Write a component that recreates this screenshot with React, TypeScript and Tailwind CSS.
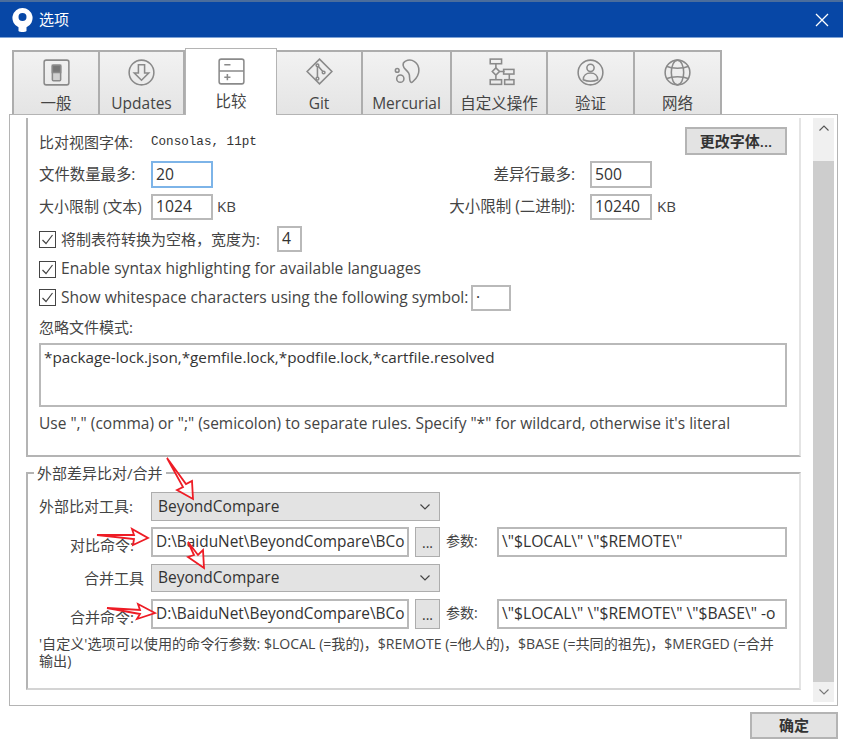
import React from "react";

const font = { fontFamily: '"Open Sans","Noto Sans CJK SC",sans-serif' };

const Stroke = ({ children, size = 33 }: { children: React.ReactNode; size?: number }) => (
  <svg width={size} height={size} viewBox="0 0 32 32" fill="none" stroke="#8a8a8a" strokeWidth="1.500">
    {children}
  </svg>
);

const icons: Record<string, React.ReactNode> = {
  general: (
    <Stroke>
      <rect x="4" y="4" width="24" height="24" rx="2" />
      <rect x="12" y="9" width="8" height="15" rx="1" fill="#d0d0d0" />
      <rect x="12" y="9" width="8" height="7" fill="#777" />
    </Stroke>
  ),
  updates: (
    <Stroke>
      <circle cx="16" cy="16" r="12" />
      <path d="M13 8.500h6v8h4l-7 7-7-7h4z" />
    </Stroke>
  ),
  diff: (
    <Stroke>
      <rect x="4" y="4" width="24" height="24" rx="2" />
      <path d="M4 15.500h24M9 9.500h6M9 21.500h6M12 18.500v6" />
    </Stroke>
  ),
  git: (
    <Stroke>
      <path d="M16 3l12 12-12 12L4 15z" />
      <path d="M14 9v13M14 9l6 7" />
      <circle cx="14" cy="9" r="1.300" fill="#fff" />
      <circle cx="20" cy="16" r="1.300" fill="#fff" />
      <circle cx="14" cy="22" r="1.300" fill="#fff" />
    </Stroke>
  ),
  hg: (
    <Stroke>
      <path d="M15 5c6-3 13 1 13 9 0 6-4 9-6 11-2 2-3-1-3-4 0-4-1-5-4-8-2-2-4-6 0-8z" />
      <circle cx="7" cy="14" r="1.800" />
      <circle cx="10" cy="22" r="3.500" />
    </Stroke>
  ),
  custom: (
    <Stroke>
      <rect x="7" y="3" width="11" height="4.500" />
      <path d="M12.500 7.500v4M12.500 19v4M16 15h5" />
      <path d="M12.500 11.500l3.500 3.500-3.500 3.500L9 15z" />
      <rect x="20" y="13" width="10" height="4.500" />
      <rect x="7" y="23" width="11" height="4.500" />
      <rect x="21" y="23" width="9" height="4.500" />
      <path d="M25.500 17.500V23" />
    </Stroke>
  ),
  auth: (
    <Stroke>
      <circle cx="16" cy="16" r="12" />
      <circle cx="16" cy="11.500" r="3.500" />
      <path d="M9 23c0-4 3-6.500 7-6.500s7 2.500 7 6.500c-4 2-10 2-14 0z" />
    </Stroke>
  ),
  net: (
    <Stroke>
      <circle cx="16" cy="16" r="12" />
      <ellipse cx="16" cy="16" rx="6" ry="12" />
      <path d="M5 10c6 2.500 16 2.500 22 0M5 22c6-2.500 16-2.500 22 0" />
    </Stroke>
  ),
};

const tabs = [
  { label: "一般", icon: "general", w: "w-[88px]" },
  { label: "Updates", icon: "updates", w: "w-[85px]" },
  { label: "比较", icon: "diff", w: "w-[92px]", active: true },
  { label: "Git", icon: "git", w: "w-[86px]" },
  { label: "Mercurial", icon: "hg", w: "w-[89px]" },
  { label: "自定义操作", icon: "custom", w: "w-[96px]" },
  { label: "验证", icon: "auth", w: "w-[87px]" },
  { label: "网络", icon: "net", w: "w-[87px]" },
];

const Tab = ({ label, icon, w, active }: { label: string; icon: string; w: string; active?: boolean }) =>
  active ? (
    <div className={`${w} h-[67px] shrink-0 flex flex-col items-center bg-white border border-b-0 border-[#b4b4b4] pt-[6px] relative z-10`}>
      {icons[icon]}
      <span className="text-[15.500px] leading-[20px] mt-[3px] text-[#444] whitespace-nowrap">{label}</span>
    </div>
  ) : (
    <div className={`${w} h-[65px] shrink-0 flex flex-col items-center border-2 border-b-0 border-l-0 first:border-l-2 border-[#adadad] bg-gradient-to-b from-[#f2f2f2] to-[#e4e4e4] pt-[4px]`}>
      {icons[icon]}
      <span className="text-[15.500px] leading-[20px] mt-[4px] text-[#444] whitespace-nowrap">{label}</span>
    </div>
  );

const Box = ({
  children,
  className = "",
  border = "border-[#b9b9b9]",
  size = "text-[15.700px]",
}: {
  children?: React.ReactNode;
  className?: string;
  border?: string;
  size?: string;
}) => (
  <div className={`flex items-center border-2 ${border} ${size} pl-[3px] bg-white text-[#333] whitespace-nowrap overflow-hidden ${className}`}>
    {children}
  </div>
);

const Check = () => (
  <span className="w-[17px] h-[17px] shrink-0 border border-[#444] flex items-center justify-center bg-white">
    <svg width="13" height="13" viewBox="0 0 13 13" fill="none" stroke="#444" strokeWidth="1.200">
      <path d="M1.500 7l3.500 3.500 6.500-8.500" />
    </svg>
  </span>
);

const Select = ({ h }: { h: string }) => (
  <div className={`w-[289px] ${h} flex items-center justify-between bg-[#e3e3e3] border border-[#adadad] pl-[6px] pr-[8px] text-[15.500px] text-[#333]`}>
    BeyondCompare
    <svg width="12" height="8" viewBox="0 0 12 8" fill="none" stroke="#444" strokeWidth="1.200">
      <path d="M1.500 1.500L6 6l4.500-4.500" />
    </svg>
  </div>
);

const CmdRow = ({ label, args, className = "" }: { label: string; args: string; className?: string }) => (
  <div className={`flex items-center h-[30px] ${className}`}>
    <span className="w-[112px] pr-[17px] text-right text-[15px] text-[#444] relative top-[3px] whitespace-nowrap">{label}</span>
    <Box className="w-[258px] h-[30px]" size="text-[15.400px]">D:\BaiduNet\BeyondCompare\BCo</Box>
    <div className="w-[25px] h-[30px] ml-[6px] bg-[#e3e3e3] border border-[#adadad] flex items-center justify-center text-[14px] text-[#333]">...</div>
    <span className="w-[57px] pl-[6px] text-[14px] text-[#444] relative -top-[2px] whitespace-nowrap">参数:</span>
    <Box className="w-[290px] h-[30px]">{args}</Box>
  </div>
);

const arrows = [
  "167,458 186,484 192,481 193,499 177,490 183,487",
  "97,535 134,535 132,529 148,538 133,545 134,539",
  "188,542 198,555 203,550 204,568 188,557 194,555",
  "107,608 140,610 138,604 155,613 137,619 140,614",
];

export default function App() {
  return (
    <div className="w-[843px] h-[744px] bg-white flex flex-col overflow-hidden relative" style={font}>
      <header className="h-[38px] shrink-0 bg-[#0747a6] border-t-2 border-t-[#4a6d9c] border-b border-b-[#7ea3d6] flex items-center justify-between pl-[12px] pr-[14px]">
        <div className="flex items-center gap-[6px]">
          <svg width="21" height="24" viewBox="0 0 21 24">
            <path fillRule="evenodd" fill="#fff" d="M10.500 0a10 10 0 0 1 4 19.200V23c-1 1.300-7 1.300-8 0V19.200a10 10 0 0 1 4-19.200zM10.500 5a4 4 0 1 0 0 8 4 4 0 0 0 0-8z" />
          </svg>
          <span className="text-white text-[15px]">选项</span>
        </div>
        <svg width="14" height="14" viewBox="0 0 14 14" stroke="#fff" strokeWidth="1.300">
          <path d="M1 1l12 12M13 1L1 13" />
        </svg>
      </header>

      <div className="flex items-end h-[77px] pl-[12px] shrink-0 -mb-px">
        {tabs.map((t) => (
          <Tab key={t.label} {...t} />
        ))}
      </div>

      <main className="ml-[9px] w-[829px] h-[592px] shrink-0 border border-[#b4b4b4] flex pt-[3px] pl-[16px]">
        <div className="w-[775px] flex flex-col text-[15px] text-[#444]">
          <section className="h-[339px] shrink-0 border-2 border-t-0 border-[#b4b4b4] border-r-[#e4e4e4] pl-[11px] pr-[12px] flex flex-col">
            <div className="flex items-center justify-between mt-[9px] h-[28px]">
              <div className="flex items-center pt-[2px]">
                <span className="w-[112px]">比对视图字体:</span>
                <span className="text-[12.600px] text-[#333]" style={{ fontFamily: '"Liberation Mono",monospace' }}>Consolas, 11pt</span>
              </div>
              <div className="w-[102px] h-[28px] bg-[#e3e3e3] border-2 border-[#b4b4b4] flex items-center justify-center font-semibold text-[#333]">更改字体...</div>
            </div>
            <div className="flex items-center mt-[6px] h-[27px]">
              <span className="w-[112px] text-[15.400px]">文件数量最多:</span>
              <Box className="w-[62px] h-[27px]" border="border-[#7db4e8]">20</Box>
              <span className="w-[377px] pr-[15px] text-right text-[15.500px]">差异行最多:</span>
              <Box className="w-[62px] h-[27px]">500</Box>
            </div>
            <div className="flex items-center mt-[5px] h-[27px]">
              <span className="w-[112px] whitespace-nowrap">大小限制 (文本)</span>
              <Box className="w-[62px] h-[26px]">1024</Box>
              <span className="w-[23px] pl-[4px]">KB</span>
              <span className="w-[354px] pr-[15px] text-right text-[15.500px] whitespace-nowrap">大小限制 (二进制):</span>
              <Box className="w-[62px] h-[26px]">10240</Box>
              <span className="ml-[5px]">KB</span>
            </div>
            <div className="flex items-center mt-[6px] h-[26px]">
              <Check />
              <span className="ml-[5px] w-[216px] whitespace-nowrap">将制表符转换为空格，宽度为:</span>
              <Box className="w-[25px] h-[26px]">4</Box>
            </div>
            <div className="flex items-center mt-[5px] h-[24px]">
              <Check />
              <span className="ml-[5px] text-[15.600px]">Enable syntax highlighting for available languages</span>
            </div>
            <div className="flex items-center mt-[3px] h-[27px]">
              <Check />
              <span className="ml-[5px] w-[410px] whitespace-nowrap text-[15.600px]">Show whitespace characters using the following symbol:</span>
              <Box className="w-[40px] h-[26px]">·</Box>
            </div>
            <div className="mt-[4px] h-[24px] flex items-center">忽略文件模式:</div>
            <div className="mt-[4px] h-[64px] w-[748px] border-2 border-[#b9b9b9] px-[3px] pt-[1px] text-[15.250px] text-[#333]">
              *package-lock.json,*gemfile.lock,*podfile.lock,*cartfile.resolved
            </div>
            <div className="mt-[5px] text-[15.500px] whitespace-nowrap">
              Use "," (comma) or ";" (semicolon) to separate rules. Specify "*" for wildcard, otherwise it's literal
            </div>
          </section>

          <section className="relative mt-[15px] h-[218px] shrink-0 border-2 border-[#b4b4b4] border-r-[#e4e4e4] border-b-[#d4d4d4] pl-[11px]">
            <span className="absolute -top-[11px] left-[6px] bg-white px-[3px] leading-[20px]">外部差异比对/合并</span>
            <div className="flex items-center mt-[18px] h-[29px]">
              <span className="w-[112px]">外部比对工具:</span>
              <Select h="h-[29px]" />
            </div>
            <CmdRow label="对比命令:" args={'\\"$LOCAL\\" \\"$REMOTE\\"'} className="mt-[6px]" />
            <div className="flex items-center mt-[7px] h-[28px]">
              <span className="w-[112px] pr-[7px] text-right">合并工具</span>
              <Select h="h-[28px]" />
            </div>
            <CmdRow label="合并命令:" args={'\\"$LOCAL\\" \\"$REMOTE\\" \\"$BASE\\" -o'} className="mt-[7px]" />
            <p className="mt-[6px] w-[748px] text-[14.100px] leading-[17px]">
              '自定义'选项可以使用的命令行参数: $LOCAL (=我的)，$REMOTE (=他人的)，$BASE (=共同的祖先)，$MERGED (=合并输出)
            </p>
          </section>
        </div>

        <aside className="ml-[12px] w-[21px] h-[584px] flex flex-col bg-[#f0f0f0]">
          <div className="h-[43px] shrink-0 flex justify-center pt-[7px]">
            <svg width="10" height="6" viewBox="0 0 10 6" fill="none" stroke="#555" strokeWidth="1.100">
              <path d="M.5 5.500L5 1l4.500 4.500" />
            </svg>
          </div>
          <div className="flex-1 bg-[#cdcdcd]" />
          <div className="h-[20px] shrink-0 flex justify-center items-center">
            <svg width="10" height="6" viewBox="0 0 10 6" fill="none" stroke="#777" strokeWidth="1.100">
              <path d="M.5.500L5 5l4.500-4.500" />
            </svg>
          </div>
        </aside>
      </main>

      <footer className="flex justify-end pr-[5px] mt-[6px]">
        <div className="w-[88px] h-[27px] bg-[#e3e3e3] border-2 border-[#b4b4b4] flex items-center justify-center text-[15px] font-semibold text-[#333]">确定</div>
      </footer>

      <svg className="absolute inset-0 pointer-events-none" width="843" height="744" fill="#fff" fillOpacity="0.6" stroke="#ee1c25" strokeWidth="1.800">
        {arrows.map((p) => (
          <polygon key={p} points={p} />
        ))}
      </svg>
    </div>
  );
}
